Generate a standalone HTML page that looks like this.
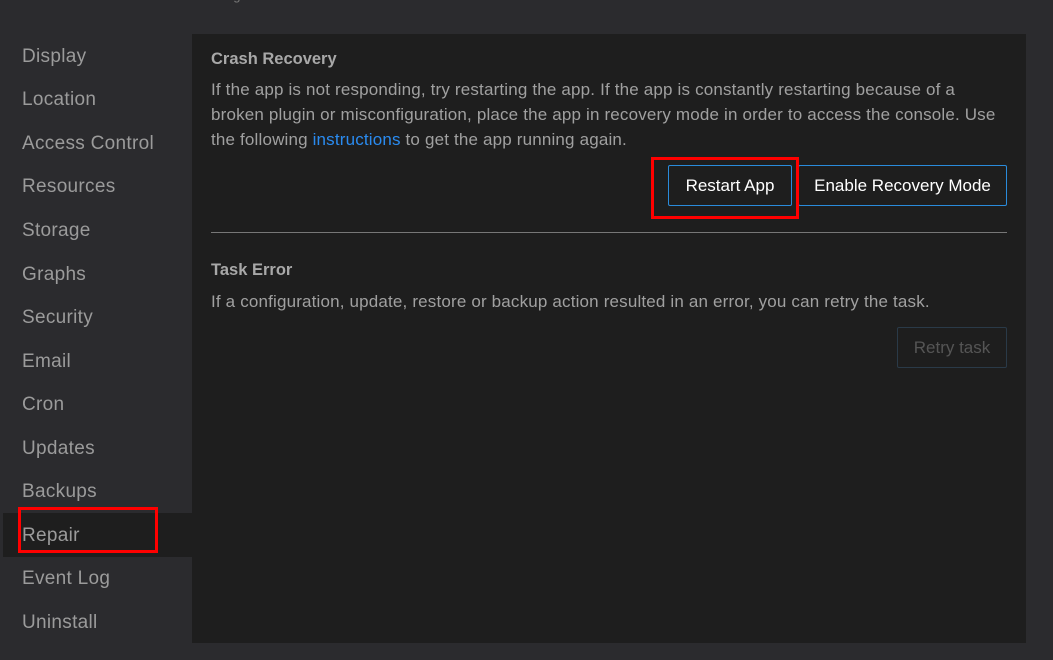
<!DOCTYPE html>
<html><head><style>
body{margin:0;width:1053px;height:660px;background:#2b2b2e;font-family:"Liberation Sans",sans-serif;position:relative;overflow:hidden}
.nav{position:absolute;left:22px;font-size:19px;letter-spacing:0.3px;color:#9b9b9b;line-height:22px}
.act{position:absolute;left:3px;top:513px;width:189px;height:44px;background:#1e1e1e}
.panel{position:absolute;left:192px;top:34px;width:834px;height:609px;background:#1e1e1e}
.t{position:absolute;left:211px;font-size:16px;font-weight:bold;color:#a8a8a8}
.p{position:absolute;left:211px;width:820px;font-size:17px;letter-spacing:0.17px;line-height:25px;color:#a0a0a0;white-space:nowrap}
.btn{position:absolute;box-sizing:border-box;border:1px solid #2a8bdb;border-radius:2px;color:#fff;font-size:17px;text-align:center;line-height:39px;height:41px}
.red{position:absolute;border:3px solid #f00;box-sizing:border-box}
</style></head><body>
<div style="position:absolute;left:192px;top:-12px;font-size:13px;color:#777">Running</div>
<div class="act"></div>
<div class="nav" style="top:46px">Display</div>
<div class="nav" style="top:89px">Location</div>
<div class="nav" style="top:133px">Access Control</div>
<div class="nav" style="top:176px">Resources</div>
<div class="nav" style="top:220px">Storage</div>
<div class="nav" style="top:264px">Graphs</div>
<div class="nav" style="top:307px">Security</div>
<div class="nav" style="top:351px">Email</div>
<div class="nav" style="top:394px">Cron</div>
<div class="nav" style="top:438px">Updates</div>
<div class="nav" style="top:481px">Backups</div>
<div class="nav" style="top:525px">Repair</div>
<div class="nav" style="top:568px">Event Log</div>
<div class="nav" style="top:612px">Uninstall</div>
<div class="red" style="left:18px;top:507px;width:140px;height:46px"></div>
<div class="panel"></div>
<div class="t" style="top:50px;font-size:16.5px">Crash Recovery</div>
<div class="p" style="top:77px">If the app is not responding, try restarting the app. If the app is constantly restarting because of a<br>broken plugin or misconfiguration, place the app in recovery mode in order to access the console. Use<br>the following <span style="color:#2a8bf0">instructions</span> to get the app running again.</div>
<div class="btn" style="left:668px;top:165px;width:124px">Restart App</div>
<div class="btn" style="left:798px;top:165px;width:209px">Enable Recovery Mode</div>
<div class="red" style="left:651px;top:157px;width:148px;height:62px"></div>
<div style="position:absolute;left:211px;top:232px;width:796px;height:1px;background:#777"></div>
<div class="t" style="top:261px;font-size:16.5px">Task Error</div>
<div class="p" style="top:289px">If a configuration, update, restore or backup action resulted in an error, you can retry the task.</div>
<div class="btn" style="left:897px;top:327px;width:110px;border-color:#2a3a48;color:#555">Retry task</div>
</body></html>
